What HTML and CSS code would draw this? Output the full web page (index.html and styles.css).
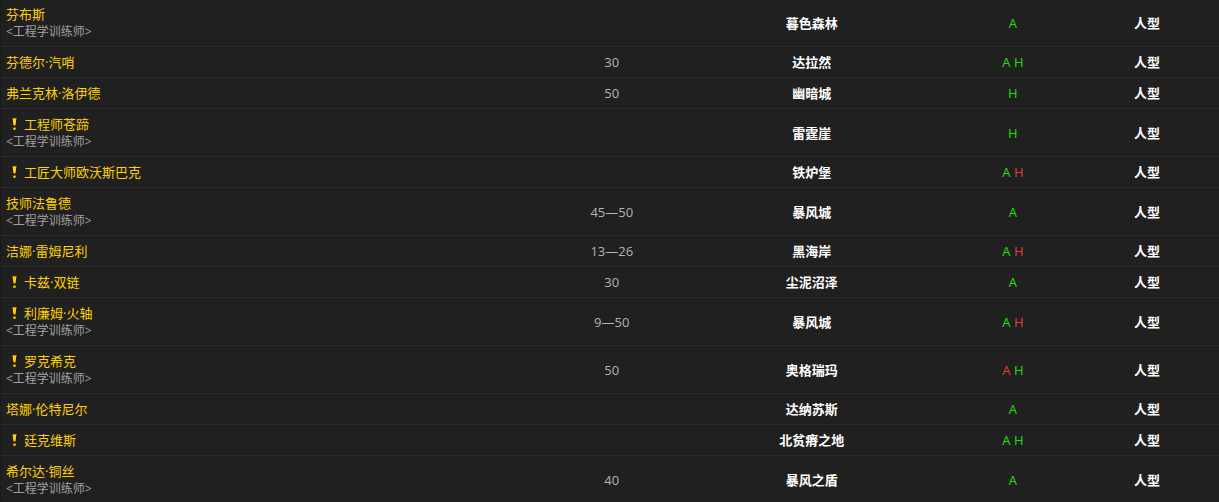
FILE: index.html
```html
<!DOCTYPE html>
<html lang="zh-CN">
<head>
<meta charset="utf-8">
<title>工程学训练师</title>
<link rel="stylesheet" href="styles.css">
</head>
<body>
<table class="list">
<colgroup>
<col class="c-name"><col class="c-level"><col class="c-loc"><col class="c-side"><col class="c-type">
</colgroup>
<tbody>
<tr><td class="name"><div class="n">芬布斯</div><div class="sub">&lt;工程学训练师&gt;</div></td><td class="lvl"></td><td class="loc">暮色森林</td><td class="side"><span class="g">A</span></td><td class="type">人型</td></tr>
<tr><td class="name"><div class="n">芬德尔·汽哨</div></td><td class="lvl">30</td><td class="loc">达拉然</td><td class="side"><span class="g">A</span> <span class="g">H</span></td><td class="type">人型</td></tr>
<tr><td class="name"><div class="n">弗兰克林·洛伊德</div></td><td class="lvl">50</td><td class="loc">幽暗城</td><td class="side"><span class="g">H</span></td><td class="type">人型</td></tr>
<tr><td class="name"><div class="n"><svg class="q" viewBox="0 0 7 14" width="7" height="14"><path d="M0.8 0.8 H6.2 L4.9 9 H2.1 Z" fill="#ffd100" stroke="#151000" stroke-width="1" stroke-linejoin="round"/><rect x="1.8" y="10" width="3.4" height="3.3" rx="0.7" fill="#ffd100" stroke="#151000" stroke-width="1"/></svg>工程师苍蹄</div><div class="sub">&lt;工程学训练师&gt;</div></td><td class="lvl"></td><td class="loc">雷霆崖</td><td class="side"><span class="g">H</span></td><td class="type">人型</td></tr>
<tr><td class="name"><div class="n"><svg class="q" viewBox="0 0 7 14" width="7" height="14"><path d="M0.8 0.8 H6.2 L4.9 9 H2.1 Z" fill="#ffd100" stroke="#151000" stroke-width="1" stroke-linejoin="round"/><rect x="1.8" y="10" width="3.4" height="3.3" rx="0.7" fill="#ffd100" stroke="#151000" stroke-width="1"/></svg>工匠大师欧沃斯巴克</div></td><td class="lvl"></td><td class="loc">铁炉堡</td><td class="side"><span class="g">A</span> <span class="r">H</span></td><td class="type">人型</td></tr>
<tr><td class="name"><div class="n">技师法鲁德</div><div class="sub">&lt;工程学训练师&gt;</div></td><td class="lvl">45—50</td><td class="loc">暴风城</td><td class="side"><span class="g">A</span></td><td class="type">人型</td></tr>
<tr><td class="name"><div class="n">洁娜·雷姆尼利</div></td><td class="lvl">13—26</td><td class="loc">黑海岸</td><td class="side"><span class="g">A</span> <span class="r">H</span></td><td class="type">人型</td></tr>
<tr><td class="name"><div class="n"><svg class="q" viewBox="0 0 7 14" width="7" height="14"><path d="M0.8 0.8 H6.2 L4.9 9 H2.1 Z" fill="#ffd100" stroke="#151000" stroke-width="1" stroke-linejoin="round"/><rect x="1.8" y="10" width="3.4" height="3.3" rx="0.7" fill="#ffd100" stroke="#151000" stroke-width="1"/></svg>卡兹·双链</div></td><td class="lvl">30</td><td class="loc">尘泥沼泽</td><td class="side"><span class="g">A</span></td><td class="type">人型</td></tr>
<tr><td class="name"><div class="n"><svg class="q" viewBox="0 0 7 14" width="7" height="14"><path d="M0.8 0.8 H6.2 L4.9 9 H2.1 Z" fill="#ffd100" stroke="#151000" stroke-width="1" stroke-linejoin="round"/><rect x="1.8" y="10" width="3.4" height="3.3" rx="0.7" fill="#ffd100" stroke="#151000" stroke-width="1"/></svg>利廉姆·火轴</div><div class="sub">&lt;工程学训练师&gt;</div></td><td class="lvl">9—50</td><td class="loc">暴风城</td><td class="side"><span class="g">A</span> <span class="r">H</span></td><td class="type">人型</td></tr>
<tr><td class="name"><div class="n"><svg class="q" viewBox="0 0 7 14" width="7" height="14"><path d="M0.8 0.8 H6.2 L4.9 9 H2.1 Z" fill="#ffd100" stroke="#151000" stroke-width="1" stroke-linejoin="round"/><rect x="1.8" y="10" width="3.4" height="3.3" rx="0.7" fill="#ffd100" stroke="#151000" stroke-width="1"/></svg>罗克希克</div><div class="sub">&lt;工程学训练师&gt;</div></td><td class="lvl">50</td><td class="loc">奥格瑞玛</td><td class="side"><span class="r">A</span> <span class="g">H</span></td><td class="type">人型</td></tr>
<tr><td class="name"><div class="n">塔娜·伦特尼尔</div></td><td class="lvl"></td><td class="loc">达纳苏斯</td><td class="side"><span class="g">A</span></td><td class="type">人型</td></tr>
<tr><td class="name"><div class="n"><svg class="q" viewBox="0 0 7 14" width="7" height="14"><path d="M0.8 0.8 H6.2 L4.9 9 H2.1 Z" fill="#ffd100" stroke="#151000" stroke-width="1" stroke-linejoin="round"/><rect x="1.8" y="10" width="3.4" height="3.3" rx="0.7" fill="#ffd100" stroke="#151000" stroke-width="1"/></svg>廷克维斯</div></td><td class="lvl"></td><td class="loc">北贫瘠之地</td><td class="side"><span class="g">A</span> <span class="g">H</span></td><td class="type">人型</td></tr>
<tr><td class="name"><div class="n">希尔达·铜丝</div><div class="sub">&lt;工程学训练师&gt;</div></td><td class="lvl">40</td><td class="loc">暴风之盾</td><td class="side"><span class="g">A</span></td><td class="type">人型</td></tr>
</tbody>
</table>
</body>
</html>
```
FILE: styles.css
```css
html, body {
  margin: 0;
  padding: 0;
  background: #202020;
}
body {
  font-family: "Open Sans", "Noto Sans CJK SC", sans-serif;
  font-size: 13px;
  color: #fff;
  overflow: hidden;
}
.list {
  width: 1219px;
  table-layout: fixed;
  border-collapse: collapse;
  margin-top: -1px;
  border-left: 1px solid #191919;
}
.c-name { width: 550px; }
.c-level { width: 122px; }
.c-loc { width: 278px; }
.c-side { width: 124px; }
.c-type { width: 144px; }
.list td {
  padding: 6px 0;
  border-bottom: 1px solid #2a2a2a;
  text-align: center;
  vertical-align: middle;
  line-height: 18px;
}
.list td.name {
  text-align: left;
  padding-left: 5px;
}
.n {
  color: #ffd100;
  line-height: 18px;
  height: 18px;
  display: flex;
  align-items: center;
}
.q {
  margin-left: 5px;
  margin-right: 6px;
  flex: none;
}
.sub {
  color: #a0a0a0;
  font-size: 12px;
  line-height: 17px;
  height: 17px;
}
.lvl {
  color: #b4b4b4;
}
.loc, .type {
  font-weight: bold;
  color: #fff;
}
.g { color: #1ee000; }
.r { color: #e23d3d; }
```
